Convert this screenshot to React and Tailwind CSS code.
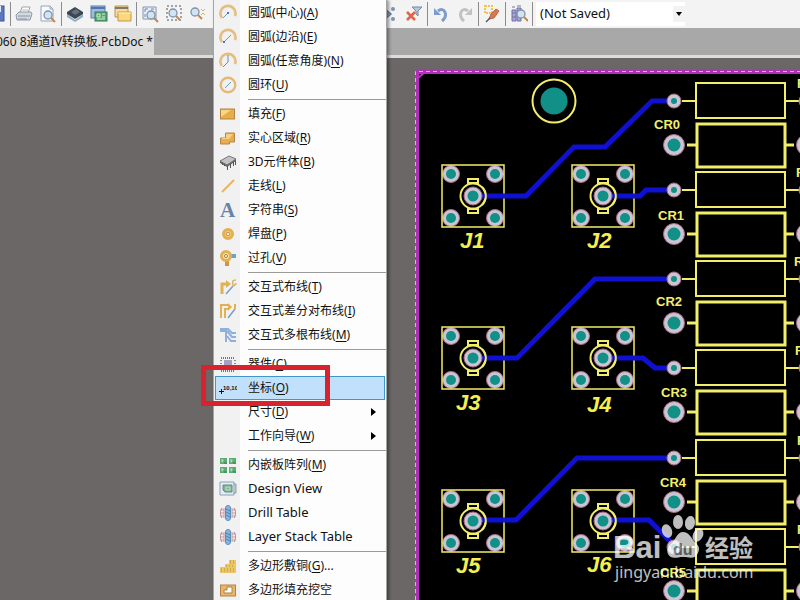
import React from "react";

const Svg = ({ children }) => (
  <svg width="18" height="18" viewBox="0 0 18 18" fill="none" className="shrink-0" aria-hidden="true">
    {children}
  </svg>
);

const Gold = "#e2b055";

const Magnifier = ({ x = 10, y = 10 }) => (
  <>
    <circle cx={x} cy={y} r="4" fill="#cfe4f5" stroke="#8392a3" strokeWidth="1.3" />
    <path d={`M${x + 3} ${y + 3}l4 4`} stroke="#b98a56" strokeWidth="2" />
  </>
);

const Gear = () => (
  <g strokeWidth="1">
    <path d="M3 4c-2 3-2 7 0 10M15 4c2 3 2 7 0 10" stroke="#b98288" />
    <path d="M1 6h4M1 9h4M1 12h4M13 6h4M13 9h4M13 12h4M5 4v10M13 4v10" stroke="#c79a9d" />
    <rect x="6.5" y="1.5" width="5" height="15" rx="2.5" fill="#83b7e2" stroke="#5d8fbd" />
    <path d="M7 5l4 2M7 8l4 2M7 11l4 2" stroke="#4c7faf" />
  </g>
);

const icons = {
  save: (
    <>
      <rect x="1" y="1" width="15" height="15" fill="#5c78bd" stroke="#3d5490" />
      <path d="M4 1h9v6H4zM5 11h7v5H5z" fill="#dfe7f5" />
    </>
  ),
  print: (
    <>
      <path d="M5 8l2-6h8l-2 6z" fill="#fff" stroke="#a0a5ad" />
      <path d="M7 5h6" stroke="#b5bac2" />
      <path d="M1 10l3-3h12l1 2-2 6H2z" fill="#d3d9e2" stroke="#8f97a3" />
      <path d="M3 11h12M3 14h9" stroke="#8d95a1" />
    </>
  ),
  preview: (
    <>
      <path d="M2 1h9l3 3v12H2z" fill="#f9fbff" stroke="#96a4bb" />
      <path d="M11 1v3h3" stroke="#96a4bb" />
      <Magnifier x={9} y={10} />
    </>
  ),
  layers: (
    <>
      <path d="M1 9l8 6 8-6v3l-8 5-8-5z" fill="#91a9bf" />
      <path d="M1 7l8-5 8 5v2l-8 5-8-5z" fill="#3c4652" />
      <path d="M5 7l5-3 4 3-5 3z" fill="#66717e" />
    </>
  ),
  board: (
    <>
      <rect x="1" y="1" width="14" height="12" fill="#9fbce0" stroke="#5d7daa" />
      <path d="M1 3h14" stroke="#5275ad" strokeWidth="2" />
      <rect x="5" y="7" width="12" height="9" fill="#57a875" stroke="#367b51" />
      <path d="M7 9h3v3H7zM12 9h3M12 12h3M7 14h8" stroke="#d7f0d0" />
    </>
  ),
  sheets: (
    <>
      <path d="M1 1h13v11H1z" fill="#f6dca0" stroke="#b89356" />
      <path d="M1 3h13" stroke="#83796a" strokeWidth="2" />
      <path d="M4 7h13v9H4z" fill="#fbd77e" stroke="#c19749" />
      <path d="M4 8h13" stroke="#fff0bd" />
    </>
  ),
  zoomDoc: (
    <>
      <path d="M2 2h13v12H2z" fill="#e9eff9" stroke="#8493b1" />
      <path d="M4 4h3M4 4v3M13 4h-3M4 12V9" stroke="#6d86b5" />
      <Magnifier />
    </>
  ),
  zoomArea: (
    <>
      <path d="M2 1h14v14H2z" fill="#f4f4f4" stroke="#555" strokeDasharray="2 2" />
      <Magnifier x={8} y={8} />
    </>
  ),
  zoomPoint: (
    <>
      <Magnifier x={6} y={7} />
      <path d="M12 4l2 2 2-2M12 10l2-2 2 2" stroke="#d2b074" />
    </>
  ),
  nodes: (
    <>
      <path d="M4 4l6 5-6 5" stroke="#6d7c90" strokeWidth="1.5" />
      <circle cx="12" cy="4" r="2" fill="#7a93b8" />
      <circle cx="12" cy="14" r="2" fill="#7a93b8" />
      <circle cx="7" cy="9" r="2" fill="#7a93b8" />
    </>
  ),
  clearFilter: (
    <>
      <path d="M7 2h10l-4 4v5l-2-2V6z" fill="#b8c8dc" stroke="#76899f" />
      <path d="M2 7l8 8M10 7l-8 8" stroke="#e06445" strokeWidth="2.5" />
    </>
  ),
  undo: (
    <>
      <path d="M6 6c6-5 11 4 4 10" stroke="#7c9dce" strokeWidth="3" />
      <path d="M2 3v7h7z" fill="#7c9dce" />
    </>
  ),
  redo: (
    <>
      <path d="M12 6c-6-5-11 4-4 10" stroke="#c0c2c4" strokeWidth="3" />
      <path d="M16 3v7H9z" fill="#c0c2c4" />
    </>
  ),
  pen: (
    <>
      <path d="M2 1h7v7H2z" stroke="#f0c44e" strokeWidth="2" strokeDasharray="2 1" />
      <path d="M6 14l2-5 5-5 3 2-5 7z" fill="#d9774f" stroke="#b9694a" />
      <path d="M3 17l4-4" stroke="#5d5555" strokeWidth="1.5" />
    </>
  ),
  inspect: (
    <>
      <path d="M2 5h4v11H2zM7 3h4v13H7z" fill="#a9a5d7" stroke="#736eaa" />
      <path d="M2 2h3M7 1h4M2 8h4M2 12h4" stroke="#6e799c" />
      <Magnifier x={11} y={9} />
    </>
  ),
  arcCenter: (
    <>
      <path d="M3 14A7.500 7.500 0 1 1 16 12" stroke="#e4bd82" strokeWidth="2.6" />
      <path d="M4 14l6-6" stroke="#6b98c9" />
      <path d="M8 8h2v2H8z" fill="#4978b5" />
    </>
  ),
  arcEdge: (
    <>
      <path d="M3 14A7.500 7.500 0 1 1 16 12" stroke="#e4bd82" strokeWidth="2.6" />
      <path d="M5 14l7-7" stroke="#6b98c9" />
      <path d="M4 13h2v2H4z" fill="#4978b5" />
    </>
  ),
  arcAny: (
    <>
      <path d="M3 14A7.500 7.500 0 1 1 16 12" stroke="#e4bd82" strokeWidth="2.6" />
      <path d="M9 3v7l-5 5" stroke="#6b8bb1" />
    </>
  ),
  circle: (
    <>
      <circle cx="9" cy="9" r="7.3" stroke="#e4b978" strokeWidth="2.4" />
      <path d="M6 12l6-6" stroke="#6b98c9" />
    </>
  ),
  fill: (
    <>
      <rect x="1.5" y="4" width="14" height="10" fill="#e6ae49" stroke="#b98345" />
      <path d="M2 5h10l-10 7z" fill="#f8d686" />
    </>
  ),
  region: (
    <>
      <path d="M6.5 4h9v9h-5v2h-9V9h5z" fill="#e6ad51" stroke="#b98345" />
      <path d="M7 5h7l-4 5H3V9h4z" fill="#f7d080" />
    </>
  ),
  chip: (
    <>
      <path d="M1 8l9-5 7 3-9 6z" fill="#c2c2c2" stroke="#777" />
      <path d="M1 8l7 4v2L1 10zM8 12l9-6v2l-9 6z" fill="#666" />
      <path d="M8.500 13v4M11.500 11v4M14.500 9v4M16.500 8v4M3.500 10v2M5.500 11v2" stroke="#555" />
    </>
  ),
  line: <path d="M3 15L15 3" stroke="#e7b35e" strokeWidth="1.8" />,
  letter: (
    <text x="1" y="16" fontSize="21" fontWeight="bold" fontFamily="Liberation Serif, serif" fill="#6584a8">
      A
    </text>
  ),
  pad: (
    <>
      <circle cx="9" cy="9" r="4.500" fill="#f4d888" stroke="#e4b04e" strokeWidth="3" />
      <circle cx="9" cy="9" r="1.800" fill="#fdf3d4" stroke="#c98c3e" />
    </>
  ),
  via: (
    <>
      <path d="M9 7h8" stroke="#6ca4bb" strokeWidth="4" />
      <path d="M8 8v9" stroke="#cf9542" strokeWidth="4" />
      <circle cx="7" cy="7" r="4.5" fill="#f9e5b0" stroke={Gold} strokeWidth="3" />
      <circle cx="7" cy="7" r="1.6" stroke="#b98a47" />
    </>
  ),
  route: (
    <>
      <path d="M3 16V6h5" stroke={Gold} strokeWidth="3" />
      <path d="M7 2l5 4-5 4z" fill={Gold} />
      <path d="M7 16l7-8" stroke="#79a0c5" strokeWidth="1.5" />
      <path d="M17 2c-5 0-3 3-3 5s3 0 3-2" stroke="#ddb461" strokeWidth="1.5" />
    </>
  ),
  routePair: (
    <>
      <path d="M2 16V3h8M6 16V7h3" stroke={Gold} strokeWidth="2" />
      <path d="M9 16l7-9" stroke="#79a0c5" strokeWidth="1.5" />
      <path d="M9 1l4 4-4 4zM15 2h2v5h-2z" fill={Gold} />
    </>
  ),
  routeMulti: (
    <path d="M1 3h8l4 4h4M1 5h6v11M8 5l5 6h4M8 10l4 5h5" stroke="#8fafdc" strokeWidth="2" />
  ),
  part: (
    <>
      <path d="M2 3h14M2 16h14" stroke="#777" strokeWidth="2" strokeDasharray="1 1" />
      <path d="M2 5v10M16 5v10" stroke="#888" strokeWidth="2" strokeDasharray="1 2" />
      <rect x="5" y="5" width="8" height="9" fill="#a8a1bd" />
    </>
  ),
  coord: (
    <>
      <path d="M0 12.500h5M2.500 10v5" stroke="#111" />
      <text x="4" y="11" fontSize="6" fontWeight="bold" fontFamily="Liberation Sans, sans-serif" fill="#111">
        10,10
      </text>
    </>
  ),
  array: (
    <>
      <path d="M1 2h7v6H1zM10 2h7v6h-7zM1 11h7v6H1zM10 11h7v6h-7z" fill="#58ad73" />
      <path d="M2 3l3 1-2 3zM11 3l3 1-2 3zM2 12l3 1-2 3zM11 12l3 1-2 3z" fill="#b3dfb6" />
      <path d="M5 7h3M14 7h3M5 16h3M14 16h3" stroke="#397b52" />
    </>
  ),
  view: (
    <>
      <path d="M1 2h14v13H1z" fill="#e4edf5" stroke="#87a2bd" />
      <path d="M14 4h3v9h-3" fill="#b8c6c8" stroke="#8fa2aa" />
      <path d="M4 5h9v7H6l-2-2z" fill="#82b39a" stroke="#5e9079" />
      <path d="M7 7h4v3H7z" stroke="#c4ddcf" />
    </>
  ),
  table: <Gear />,
  pour: (
    <>
      <path d="M1 16v-6h5V7h4V3h7v13z" fill="#ecc565" />
      <path d="M2 12h14M2 14h14M7 9h9M11 6h5M11 4h5" stroke="#b98e3c" strokeDasharray="1 2" />
    </>
  ),
  cutout: (
    <>
      <rect x="1.5" y="4" width="15" height="11" fill="#e9b668" stroke="#b58348" />
      <path d="M8 6h5v6H5V9h3z" fill="#fff" stroke="#a8834c" />
    </>
  ),
};

const menuGroups = [
  [
    { icon: "arcCenter", label: "圆弧(中心)", hotkey: "A" },
    { icon: "arcEdge", label: "圆弧(边沿)", hotkey: "E" },
    { icon: "arcAny", label: "圆弧(任意角度)", hotkey: "N" },
    { icon: "circle", label: "圆环", hotkey: "U" },
  ],
  [
    { icon: "fill", label: "填充", hotkey: "F" },
    { icon: "region", label: "实心区域", hotkey: "R" },
    { icon: "chip", label: "3D元件体", hotkey: "B" },
    { icon: "line", label: "走线", hotkey: "L" },
    { icon: "letter", label: "字符串", hotkey: "S" },
    { icon: "pad", label: "焊盘", hotkey: "P" },
    { icon: "via", label: "过孔", hotkey: "V" },
  ],
  [
    { icon: "route", label: "交互式布线", hotkey: "T" },
    { icon: "routePair", label: "交互式差分对布线", hotkey: "I" },
    { icon: "routeMulti", label: "交互式多根布线", hotkey: "M" },
  ],
  [
    { icon: "part", label: "器件", hotkey: "C" },
    { icon: "coord", label: "坐标", hotkey: "O", active: true },
    { label: "尺寸", hotkey: "D", sub: true },
    { label: "工作向导", hotkey: "W", sub: true },
  ],
  [
    { icon: "array", label: "内嵌板阵列", hotkey: "M" },
    { icon: "view", label: "Design View", latin: true },
    { icon: "table", label: "Drill Table", latin: true },
    { icon: "table", label: "Layer Stack Table", latin: true },
  ],
  [
    { icon: "pour", label: "多边形敷铜", hotkey: "G", tail: "..." },
    { icon: "cutout", label: "多边形填充挖空" },
  ],
];

const ToolButton = ({ name }) => (
  <button type="button" aria-label={name} className="flex h-6 w-6 shrink-0 items-center justify-center">
    <Svg>{icons[name]}</Svg>
  </button>
);

const Divider = () => <div className="mx-px h-6 w-px shrink-0 bg-[#8c8c8c]" />;

const Toolbar = () => (
  <header className="-ml-[15px] flex h-7 shrink-0 items-center bg-[#f3f3f3]">
    <ToolButton name="save" />
    <Divider />
    <ToolButton name="print" />
    <ToolButton name="preview" />
    <Divider />
    <ToolButton name="layers" />
    <ToolButton name="board" />
    <ToolButton name="sheets" />
    <Divider />
    <ToolButton name="zoomDoc" />
    <ToolButton name="zoomArea" />
    <ToolButton name="zoomPoint" />
    <div className="w-42 shrink-0" />
    <ToolButton name="nodes" />
    <ToolButton name="clearFilter" />
    <Divider />
    <ToolButton name="undo" />
    <ToolButton name="redo" />
    <Divider />
    <ToolButton name="pen" />
    <Divider />
    <ToolButton name="inspect" />
    <Divider />
    <div className="ml-0.5 flex items-center bg-white">
      <select aria-label="Filter" className="h-6 w-[137px] appearance-none bg-white pl-1 text-[13px]">
        <option>(Not Saved)</option>
      </select>
      <span className="flex h-4 w-3 items-center justify-center bg-[#f3f3f3]">
        <svg width="6" height="4" aria-hidden="true">
          <path d="M0 0h6L3 4z" fill="#000" />
        </svg>
      </span>
    </div>
  </header>
);

const MenuItem = ({ item }) => (
  <button
    type="button"
    className={
      item.active
        ? "mx-px flex h-6 items-center border border-[#3f97c9] bg-[#c1e0fb] text-left"
        : "mx-px flex h-6 items-center border border-transparent text-left"
    }
  >
    <span className="flex w-6 shrink-0 justify-center">{item.icon && <Svg>{icons[item.icon]}</Svg>}</span>
    <span className={item.latin ? "grow pl-2 text-[13px] whitespace-nowrap" : "grow pl-2 whitespace-nowrap"}>
      {item.label}
      {item.hotkey && (
        <>
          (<u className="underline-offset-2">{item.hotkey}</u>)
        </>
      )}
      {item.tail}
    </span>
    {item.sub && (
      <svg width="5" height="8" className="mr-2" aria-hidden="true">
        <path d="M0 0v8l5-4z" fill="#000" />
      </svg>
    )}
  </button>
);

const PlaceMenu = () => (
  <nav className="absolute top-0 left-[213px] w-[174px] border-x border-[#a5a5a5] bg-[linear-gradient(90deg,#f1f1f1_26px,#fdfdfd_26px)] pt-px shadow-[2px_0_3px_#0006]">
    {menuGroups.map((group, i) => (
      <div key={i} className="flex flex-col">
        {i > 0 && <div className="my-0.5 ml-[34px] h-px bg-[#9a9a9a]" />}
        {group.map((item) => (
          <MenuItem key={item.label} item={item} />
        ))}
      </div>
    ))}
  </nav>
);

const Pad = ({ x, y, r, hole }) => (
  <g strokeWidth="1">
    <circle cx={x} cy={y} r={r} fill="#cbc5d3" stroke="#a66a85" />
    <circle cx={x} cy={y} r={hole} fill="#109087" stroke="none" />
  </g>
);

const Connector = ({ x, y }) => (
  <g transform={`translate(${x} ${y})`} stroke="#f2ee6a" strokeWidth="2">
    <Pad x={9} y={9} r={8.5} hole={5} />
    <Pad x={53} y={9} r={8.5} hole={5} />
    <Pad x={9} y={53} r={8.5} hole={5} />
    <Pad x={53} y={53} r={8.5} hole={5} />
    <rect x="0" y="0" width="62" height="62" strokeWidth="1.5" />
    <circle cx="31" cy="31" r="12.5" />
    <path d="M26 18v-4h10v4zM26 44v4h10v-4z" />
  </g>
);

const connectors = [
  { x: 442, y: 165, name: "J1", tx: 460, ty: 248 },
  { x: 572, y: 165, name: "J2", tx: 587, ty: 248 },
  { x: 442, y: 327, name: "J3", tx: 456, ty: 410 },
  { x: 572, y: 327, name: "J4", tx: 587, ty: 412 },
  { x: 442, y: 490, name: "J5", tx: 456, ty: 573 },
  { x: 572, y: 490, name: "J6", tx: 587, ty: 572 },
];

const traces = [
  "M472 196H526L574 147H605L652 101H674",
  "M602 196H640L646 190H674",
  "M472 358H517L595 279H674",
  "M602 358H643L655 368H674",
  "M472 520H516L577 458H674",
  "M602 520H649L676 547",
];

const rows = [
  { y: 101, name: "CR0", tx: 654, ty: 129, rx: 797 },
  { y: 190, name: "CR1", tx: 658, ty: 220, rx: 796 },
  { y: 279, name: "CR2", tx: 656, ty: 306, rx: 794 },
  { y: 368, name: "CR3", tx: 661, ty: 397, rx: 795 },
  { y: 458, name: "CR4", tx: 660, ty: 487, rx: 797 },
  { y: 547, name: "CR5", tx: 660, ty: 577, rx: 797 },
];

const Watermark = () => (
  <g fill="#fff" opacity="0.75" fontFamily="Liberation Sans, sans-serif">
    <text x="613" y="558" fontSize="31" fontWeight="bold">
      Bai
    </text>
    <ellipse cx="667" cy="531" rx="5" ry="7" transform="rotate(-20 667 531)" />
    <ellipse cx="678" cy="522" rx="5" ry="7" />
    <ellipse cx="690" cy="523" rx="5" ry="7" transform="rotate(10 690 523)" />
    <ellipse cx="698" cy="535" rx="5" ry="7" transform="rotate(25 698 535)" />
    <path d="M683 532c6 0 8 6 12 10s5 6 3 11c-3 7-9 4-15 4s-12 3-15-3c-2-5 1-8 4-11 4-4 5-11 11-11z" />
    <text x="673" y="555" fontSize="16" fontWeight="bold" fill="#777">
      du
    </text>
    <text x="705" y="557" fontSize="24" fontWeight="bold" fontFamily="Noto Sans CJK SC, sans-serif">
      经验
    </text>
    <text x="615" y="578" fontSize="16" fontWeight="normal" fontFamily="Noto Sans, sans-serif">
      jingyan.baidu.com
    </text>
  </g>
);

// board drawing uses window coordinates, moved so that the board corner is the origin
const Board = () => (
  <svg className="h-full w-full bg-black" fill="none" fontFamily="Liberation Sans, sans-serif" fontWeight="bold">
    <g transform="translate(-415 -70)">
      <path d="M417 2000V72H4000" stroke="#b030b8" strokeWidth="4" />
      <path d="M415.500 2000V71.500H4000" stroke="#eea6ef" strokeDasharray="4 3" />
      <path d="M417 79L425 72" stroke="#c22fc9" strokeWidth="2" />

      <circle cx="554" cy="101" r="21.5" stroke="#f2ee6a" strokeWidth="2" />
      <circle cx="554" cy="101" r="13.5" fill="#109087" />

      {connectors.map((c) => (
        <Connector key={c.name} x={c.x} y={c.y} />
      ))}
      {traces.map((d) => (
        <path key={d} d={d} stroke="#1010d2" strokeWidth="5" />
      ))}
      {connectors.map((c) => (
        <g key={c.name}>
          <path d={`M${c.x + 40} ${c.y + 22}a12.5 12.5 0 0 1 0 18`} stroke="#f2ee6a" strokeWidth="2" />
          <Pad x={c.x + 31} y={c.y + 31} r={9} hole={5.5} />
          <text x={c.tx} y={c.ty} fontSize="22" fontStyle="italic" fill="#f4f04e">
            {c.name}
          </text>
        </g>
      ))}

      {rows.map((r) => (
        <g key={r.name} stroke="#f2ee6a">
          <path d={`M682 ${r.y}H696M786 ${r.y}H800`} strokeWidth="2" />
          <rect x="696" y={r.y - 18} width="89" height="35" strokeWidth="2" />
          <path d={`M687 ${r.y + 44}H697M786 ${r.y + 44}H794`} strokeWidth="3" />
          <rect x="697" y={r.y + 23} width="88" height="43" strokeWidth="3" />
          <Pad x={674} y={r.y} r={7} hole={3} />
          <Pad x={674} y={r.y + 44} r={10.5} hole={6.5} />
          <Pad x={806} y={r.y} r={7} hole={3} />
          <Pad x={807} y={r.y + 44} r={10.5} hole={6.5} />
          <text x={r.tx} y={r.ty} fontSize="13" fill="#f4f06a" stroke="none">
            {r.name}
          </text>
          <text x={r.rx} y={r.y - 13} fontSize="13" fill="#f4f06a" stroke="none">
            R
          </text>
        </g>
      ))}
      <Watermark />
    </g>
  </svg>
);

export default function App() {
  return (
    <div className="relative flex h-screen flex-col overflow-hidden bg-[#6b6766] font-['Noto_Sans','Noto_Sans_CJK_SC',sans-serif] text-xs text-[#111]">
      <Toolbar />
      <div className="flex h-[30px] shrink-0 items-start border-b-3 border-[#dcdcdc] bg-[#a8a8a8]">
        <div className="-ml-1 flex h-[27px] w-[158px] items-center bg-[#dcdcdc] whitespace-nowrap">
          060 8通道IV转换板.PcbDoc *
        </div>
      </div>
      <main className="min-h-0 grow pt-3 pl-[415px]">
        <Board />
      </main>
      <PlaceMenu />
      <div className="pointer-events-none absolute top-[365px] left-[201px] h-[41px] w-[129px] border-5 border-[#d8232f]" />
    </div>
  );
}
